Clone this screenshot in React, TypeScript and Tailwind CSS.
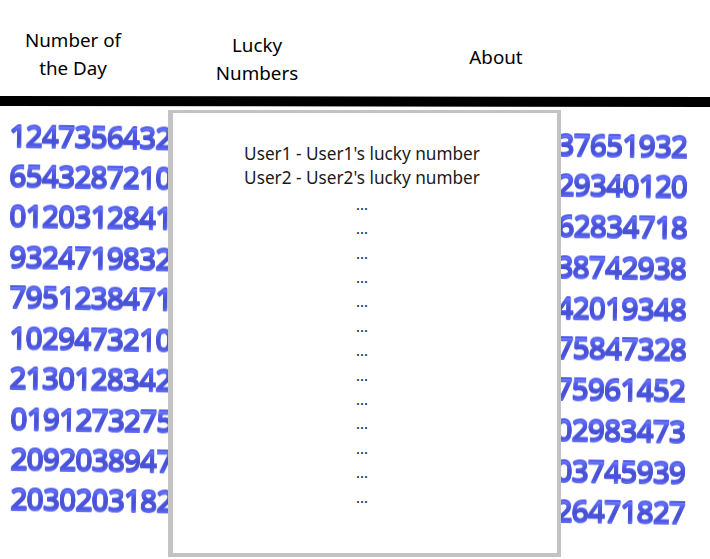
const LEFT = ['1247356432','6543287210','0120312841','9324719832','7951238471','1029473210','2130128342','0191273275','2092038947','2030203182'];
const RIGHT = ['37651932','29340120','62834718','38742938','42019348','75847328','75961452','02983473','03745939','26471827'];

const digit =
  "inline-block whitespace-nowrap pr-[2px] font-['Noto_Sans',sans-serif] font-semibold text-[31px] leading-[40px] tracking-[-1.5px] text-transparent bg-clip-text bg-[linear-gradient(180deg,#6f7bff_10px,#535eea_14px,#4750cf_21px,#4b55dc_28px,#6672f6_32px)] [filter:drop-shadow(0.4px_-0.5px_0_#4c56d8)_drop-shadow(0.5px_-0.7px_0_#6470fb)]";

export default function App() {
  return (
    <div className="w-[710px] h-[559px] overflow-hidden bg-white text-black flex flex-col font-['Noto_Sans','Open_Sans',sans-serif]">
      <header className="h-[96px] flex shrink-0 text-[18.8px] leading-[28px] text-center">
        <div className="w-[146px] pt-[26px]">Number of<br />the Day</div>
        <div className="w-[222px] pt-[31px]">Lucky<br />Numbers</div>
        <div className="w-[256px] pt-[43.4px]">About</div>
      </header>
      <div className="h-[10px] w-[714px] shrink-0 bg-black origin-left rotate-[0.08deg]" />
      <main className="grid grid-cols-[168px_393px_149px] h-[453px]">
        <div className="overflow-hidden pl-[8.5px] pt-[9.5px]">
          {LEFT.map((n, i) => (
            <div key={n} className="h-[40.45px] origin-left rotate-[0.9deg]" style={{ marginLeft: i * 0.16 }}>
              <span className={digit}>{n}</span>
            </div>
          ))}
        </div>
        <section className="mt-[4px] h-[447px] border-t-[3px] border-r-[4px] border-b-[4px] border-l-[5px] border-[#c3c3c3] bg-white pt-[28.5px] pr-[6px] text-center text-[17.2px] leading-[24.4px] text-[#1a1a1a]">
          <div className="whitespace-nowrap">User1 - User1's lucky number</div>
          <div className="whitespace-nowrap">User2 - User2's lucky number</div>
          {Array.from({ length: 13 }, (_, i) => <div key={i} className="relative top-[1.5px] text-[15px] leading-[24.4px]">...</div>)}
        </section>
        <div className="overflow-hidden flex flex-col items-end pr-[21px] pt-[20.5px]">
          {RIGHT.map((n, i) => (
            <div key={n} className="h-[40.75px] shrink-0 origin-right rotate-[0.9deg]" style={{ marginRight: i * 0.28 }}>
              <span className={digit}>{n}</span>
            </div>
          ))}
        </div>
      </main>
    </div>
  );
}
